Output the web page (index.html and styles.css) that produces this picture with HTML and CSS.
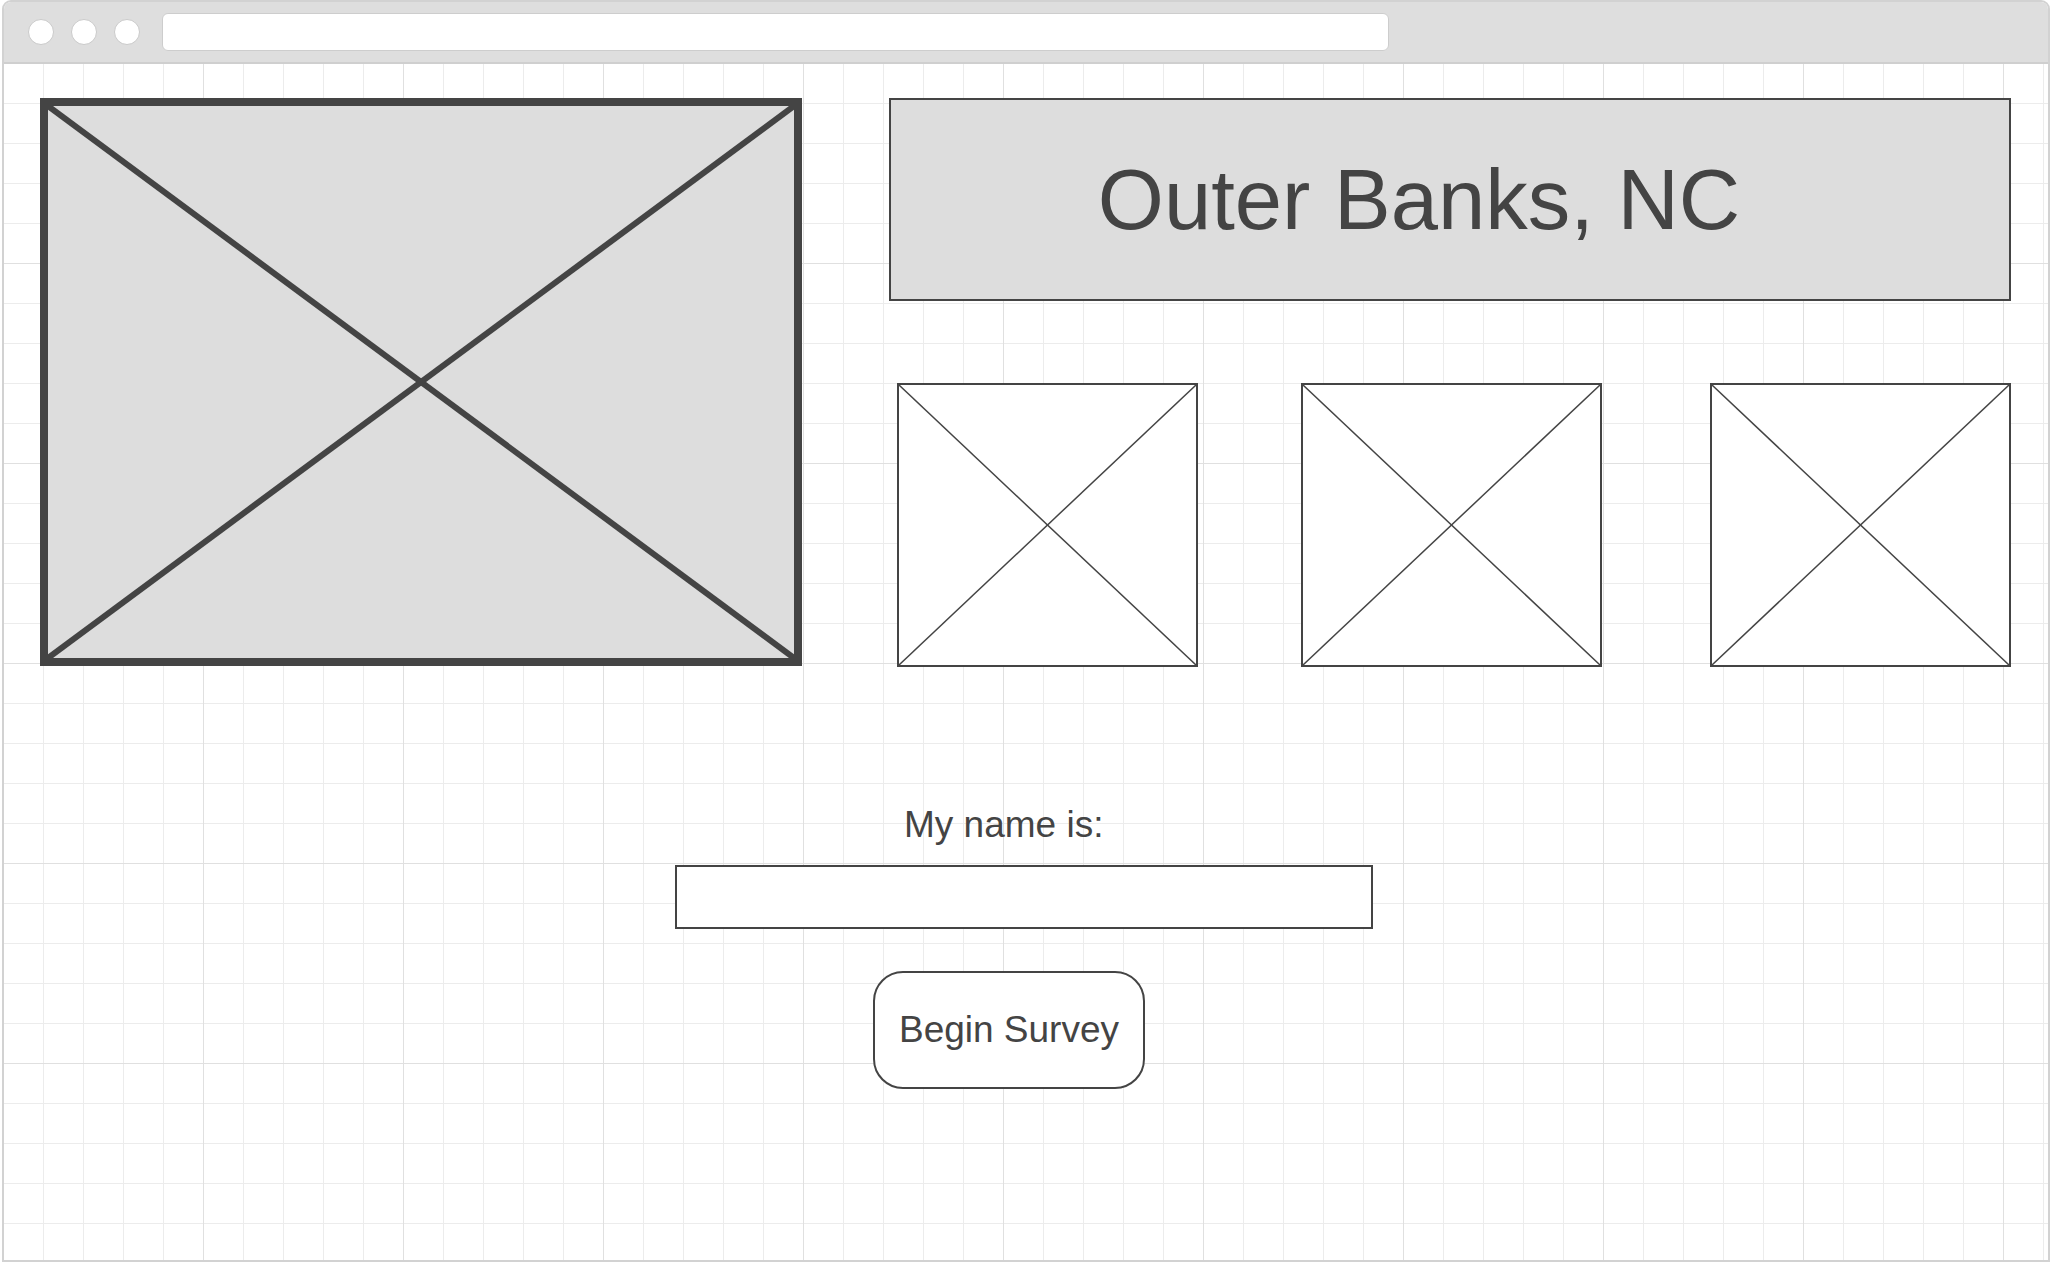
FILE: index.html
```html
<!DOCTYPE html>
<html lang="en">
<head>
<meta charset="utf-8">
<title>Outer Banks, NC</title>
<link rel="stylesheet" href="styles.css">
</head>
<body>
<div class="window">
  <div class="titlebar">
    <span class="dot"></span>
    <span class="dot"></span>
    <span class="dot"></span>
    <div class="address"></div>
  </div>
  <div class="canvas">
    <div class="top-row">
      <div class="hero">
        <svg class="x" viewBox="0 0 100 100" preserveAspectRatio="none">
          <line x1="0" y1="0" x2="100" y2="100" vector-effect="non-scaling-stroke"/>
          <line x1="100" y1="0" x2="0" y2="100" vector-effect="non-scaling-stroke"/>
        </svg>
      </div>
      <div class="right">
        <div class="title">Outer Banks, NC</div>
        <div class="thumbs">
          <div class="thumb">
            <svg class="x thin" viewBox="0 0 100 100" preserveAspectRatio="none">
              <line x1="0" y1="0" x2="100" y2="100" vector-effect="non-scaling-stroke"/>
              <line x1="100" y1="0" x2="0" y2="100" vector-effect="non-scaling-stroke"/>
            </svg>
          </div>
          <div class="thumb thumb-mid">
            <svg class="x thin" viewBox="0 0 100 100" preserveAspectRatio="none">
              <line x1="0" y1="0" x2="100" y2="100" vector-effect="non-scaling-stroke"/>
              <line x1="100" y1="0" x2="0" y2="100" vector-effect="non-scaling-stroke"/>
            </svg>
          </div>
          <div class="thumb thumb-last">
            <svg class="x thin" viewBox="0 0 100 100" preserveAspectRatio="none">
              <line x1="0" y1="0" x2="100" y2="100" vector-effect="non-scaling-stroke"/>
              <line x1="100" y1="0" x2="0" y2="100" vector-effect="non-scaling-stroke"/>
            </svg>
          </div>
        </div>
      </div>
    </div>
    <div class="form">
      <label class="label" for="name">My name is:</label>
      <input class="name-input" id="name" type="text">
      <button class="begin" type="button">Begin Survey</button>
    </div>
  </div>
</div>
</body>
</html>
```

FILE: styles.css
```css
html, body {
  margin: 0;
  padding: 0;
  background: #ffffff;
}

body {
  font-family: "Liberation Sans", Arial, sans-serif;
  color: #444444;
}

.window {
  margin-left: 2px;
  width: 2048px;
  height: 1262px;
  box-sizing: border-box;
  border: 2px solid #d2d2d2;
  border-radius: 9px 9px 0 0;
  display: flex;
  flex-direction: column;
  overflow: hidden;
}

.titlebar {
  flex: none;
  height: 60px;
  background: #dedede;
  border-bottom: 2px solid #cfcfcf;
  display: flex;
  align-items: center;
  padding-left: 24px;
}

.dot {
  width: 24px;
  height: 24px;
  border: 1.5px solid #cacaca;
  border-radius: 50%;
  background: #ffffff;
  margin-right: 17px;
  flex: none;
}

.address {
  margin-left: 5px;
  width: 1227px;
  height: 38px;
  box-sizing: border-box;
  border: 1.5px solid #cdcdcd;
  border-radius: 6px;
  background: #ffffff;
}

.canvas {
  flex: 1;
  padding: 34px 0 0 36px;
  background-color: #ffffff;
  background-image:
    linear-gradient(to right, #e0e0e0 1px, transparent 1px),
    linear-gradient(to bottom, #e0e0e0 1px, transparent 1px),
    linear-gradient(to right, #ececec 1px, transparent 1px),
    linear-gradient(to bottom, #ececec 1px, transparent 1px);
  background-size: 200px 200px, 200px 200px, 40px 40px, 40px 40px;
  background-position: 199px 199px, 199px 199px, 39px 39px, 39px 39px;
}

.top-row {
  display: flex;
  align-items: flex-start;
}

.hero {
  width: 762px;
  height: 568px;
  box-sizing: border-box;
  border: 8px solid #444444;
  background: #dddddd;
  flex: none;
}

.x {
  display: block;
  width: 100%;
  height: 100%;
}

.x line {
  stroke: #444444;
  stroke-width: 6;
}

.x.thin line {
  stroke-width: 1.5;
}

.right {
  margin-left: 87px;
  width: 1122px;
  flex: none;
}

.title {
  height: 203px;
  box-sizing: border-box;
  border: 2px solid #444444;
  background: #dddddd;
  display: flex;
  align-items: center;
  justify-content: center;
  padding-right: 62px;
  font-size: 85px;
  line-height: 1;
  color: #444444;
}

.thumbs {
  margin-top: 82px;
  padding-left: 8px;
  display: flex;
}

.thumb {
  width: 301px;
  height: 284px;
  box-sizing: border-box;
  border: 2px solid #444444;
  background: #ffffff;
  flex: none;
}

.thumb-mid {
  margin-left: 103px;
}

.thumb-last {
  margin-left: 108px;
}

.form {
  margin-top: 137px;
  margin-left: 635px;
  display: flex;
  flex-direction: column;
  align-items: flex-start;
}

.label {
  margin-left: 229px;
  font-size: 37px;
  line-height: 42px;
  color: #444444;
}

.name-input {
  margin: 19px 0 0 0;
  width: 698px;
  height: 64px;
  box-sizing: border-box;
  border: 2px solid #444444;
  border-radius: 0;
  background: #ffffff;
  padding: 0 12px;
  font-family: "Liberation Sans", Arial, sans-serif;
  font-size: 30px;
  color: #444444;
  outline: none;
}

.begin {
  margin: 42px 0 0 198px;
  width: 272px;
  height: 118px;
  box-sizing: border-box;
  border: 2px solid #444444;
  border-radius: 30px;
  background: #ffffff;
  padding: 0;
  font-family: "Liberation Sans", Arial, sans-serif;
  font-size: 37px;
  color: #444444;
  cursor: pointer;
}
```
